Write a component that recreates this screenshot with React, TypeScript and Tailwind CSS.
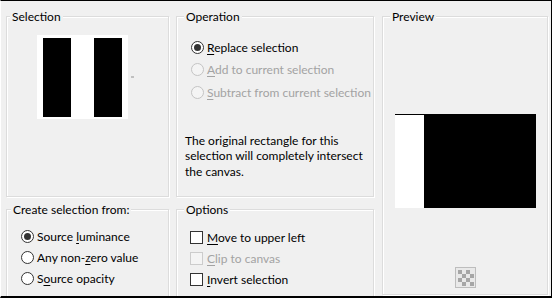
const font = { fontFamily: "Lato, 'Noto Sans', sans-serif" };

const GroupBox = ({ label, labelLeft, className, children }: { label: string; labelLeft: string; className: string; children?: React.ReactNode }) => (
  <div className={`relative shrink-0 border border-[#dcdcdc] shadow-[inset_1px_1px_0_#fff,1px_1px_0_#fff] ${className}`}>
    <span className={`absolute top-[-8px] ${labelLeft} px-[2px] bg-[#f0f0f0] text-[12px] leading-[15px] text-black`}>{label}</span>
    {children}
  </div>
);

const Radio = ({ checked, disabled, children, className }: { checked?: boolean; disabled?: boolean; children: React.ReactNode; className: string }) => (
  <div className={`flex items-center gap-[3px] ${className}`}>
    <span
      className={`w-[13px] h-[13px] rounded-full border flex items-center justify-center ${
        disabled ? "border-[#c4c4c4] bg-[#f4f4f4]" : "border-[#333] bg-white"
      }`}
    >
      {checked && <span className="w-[7px] h-[7px] rounded-full bg-[#333]" />}
    </span>
    <span className={`text-[12px] leading-[15px] ${disabled ? "text-[#a3a3a3]" : "text-black"}`}>{children}</span>
  </div>
);

const Check = ({ disabled, children }: { disabled?: boolean; children: React.ReactNode }) => (
  <div className="flex items-center gap-[4px] h-[21px]">
    <span className={`w-[13px] h-[13px] border ${disabled ? "border-[#cccccc] bg-[#f4f4f4]" : "border-[#333] bg-white"}`} />
    <span className={`text-[12px] leading-[15px] ${disabled ? "text-[#a3a3a3]" : "text-black"}`}>{children}</span>
  </div>
);

export default function App() {
  return (
    <div
      style={font}
      className="w-[552px] h-[298px] overflow-hidden bg-[#f0f0f0] border-t border-r border-b-2 border-black border-l border-l-white pl-[5px] pt-[15px] flex"
    >
      {/* left column */}
      <div className="w-[163px] flex flex-col shrink-0">
        <GroupBox label="Selection" labelLeft="left-[3px]" className="h-[181px]">
          <div className="flex items-center mt-[18px] ml-[30px]">
            <div className="w-[91px] h-[84px] bg-white flex pl-[6px] pt-[3px] gap-[23px]">
              <div className="w-[28px] h-[79px] bg-black" />
              <div className="w-[28px] h-[79px] bg-black" />
            </div>
            <span className="ml-[3px] w-[3px] h-[2px] bg-[#c0c0c0]" />
          </div>
        </GroupBox>
        <GroupBox label="Create selection from:" labelLeft="left-[4px]" className="h-[110px] mt-[12px] pt-[16px] pl-[14px]">
          <Radio checked className="h-[21px]">
            Source <u className="underline-offset-2">l</u>uminance
          </Radio>
          <Radio className="h-[21px]">
            Any non-<u className="underline-offset-2">z</u>ero value
          </Radio>
          <Radio className="h-[21px]">
            S<u className="underline-offset-2">o</u>urce opacity
          </Radio>
        </GroupBox>
      </div>

      {/* middle column */}
      <div className="w-[198px] ml-[7px] flex flex-col shrink-0">
        <GroupBox label="Operation" labelLeft="left-[7px]" className="h-[181px] pt-[19px] pl-[8px]">
          <div className="pl-[6px]">
            <Radio checked className="h-[22.5px]">
              <u className="underline-offset-2">R</u>eplace selection
            </Radio>
            <Radio disabled className="h-[22.5px]">
              <u className="underline-offset-2">A</u>dd to current selection
            </Radio>
            <Radio disabled className="h-[22.5px]">
              <u className="underline-offset-2">S</u>ubtract from current selection
            </Radio>
          </div>
          <p className="mt-[29px] text-[12px] leading-[15.5px] text-black">
            The original rectangle for this
            <br />
            selection will completely intersect
            <br />
            the canvas.
          </p>
        </GroupBox>
        <GroupBox label="Options" labelLeft="left-[7px]" className="h-[110px] mt-[12px] pt-[17px] pl-[13px]">
          <Check>
            <u className="underline-offset-2">M</u>ove to upper left
          </Check>
          <Check disabled>
            <u className="underline-offset-2">C</u>lip to canvas
          </Check>
          <Check>
            <u className="underline-offset-2">I</u>nvert selection
          </Check>
        </GroupBox>
      </div>

      {/* preview */}
      <GroupBox label="Preview" labelLeft="left-[7px]" className="w-[166px] h-[279px] ml-[8px] flex flex-col items-center">
        <div className="mt-[97px] w-[141px] h-[94px] bg-black pt-[1px]">
          <div className="w-[29px] h-[93px] bg-white" />
        </div>
        <svg className="mt-[59px]" width="21" height="21" viewBox="0 0 21 21">
          <rect x="0.5" y="0.5" width="20" height="20" fill="#e9e9e9" stroke="#bdbdbd" />
          {[0, 1, 2, 3].map((r) =>
            [0, 1, 2, 3].map((c) =>
              (r + c) % 2 === 0 ? (
                <rect key={`${r}-${c}`} x={3 + c * 4} y={3 + r * 4} width="4" height="4" fill="#a6a6a6" />
              ) : null
            )
          )}
        </svg>
      </GroupBox>
    </div>
  );
}
